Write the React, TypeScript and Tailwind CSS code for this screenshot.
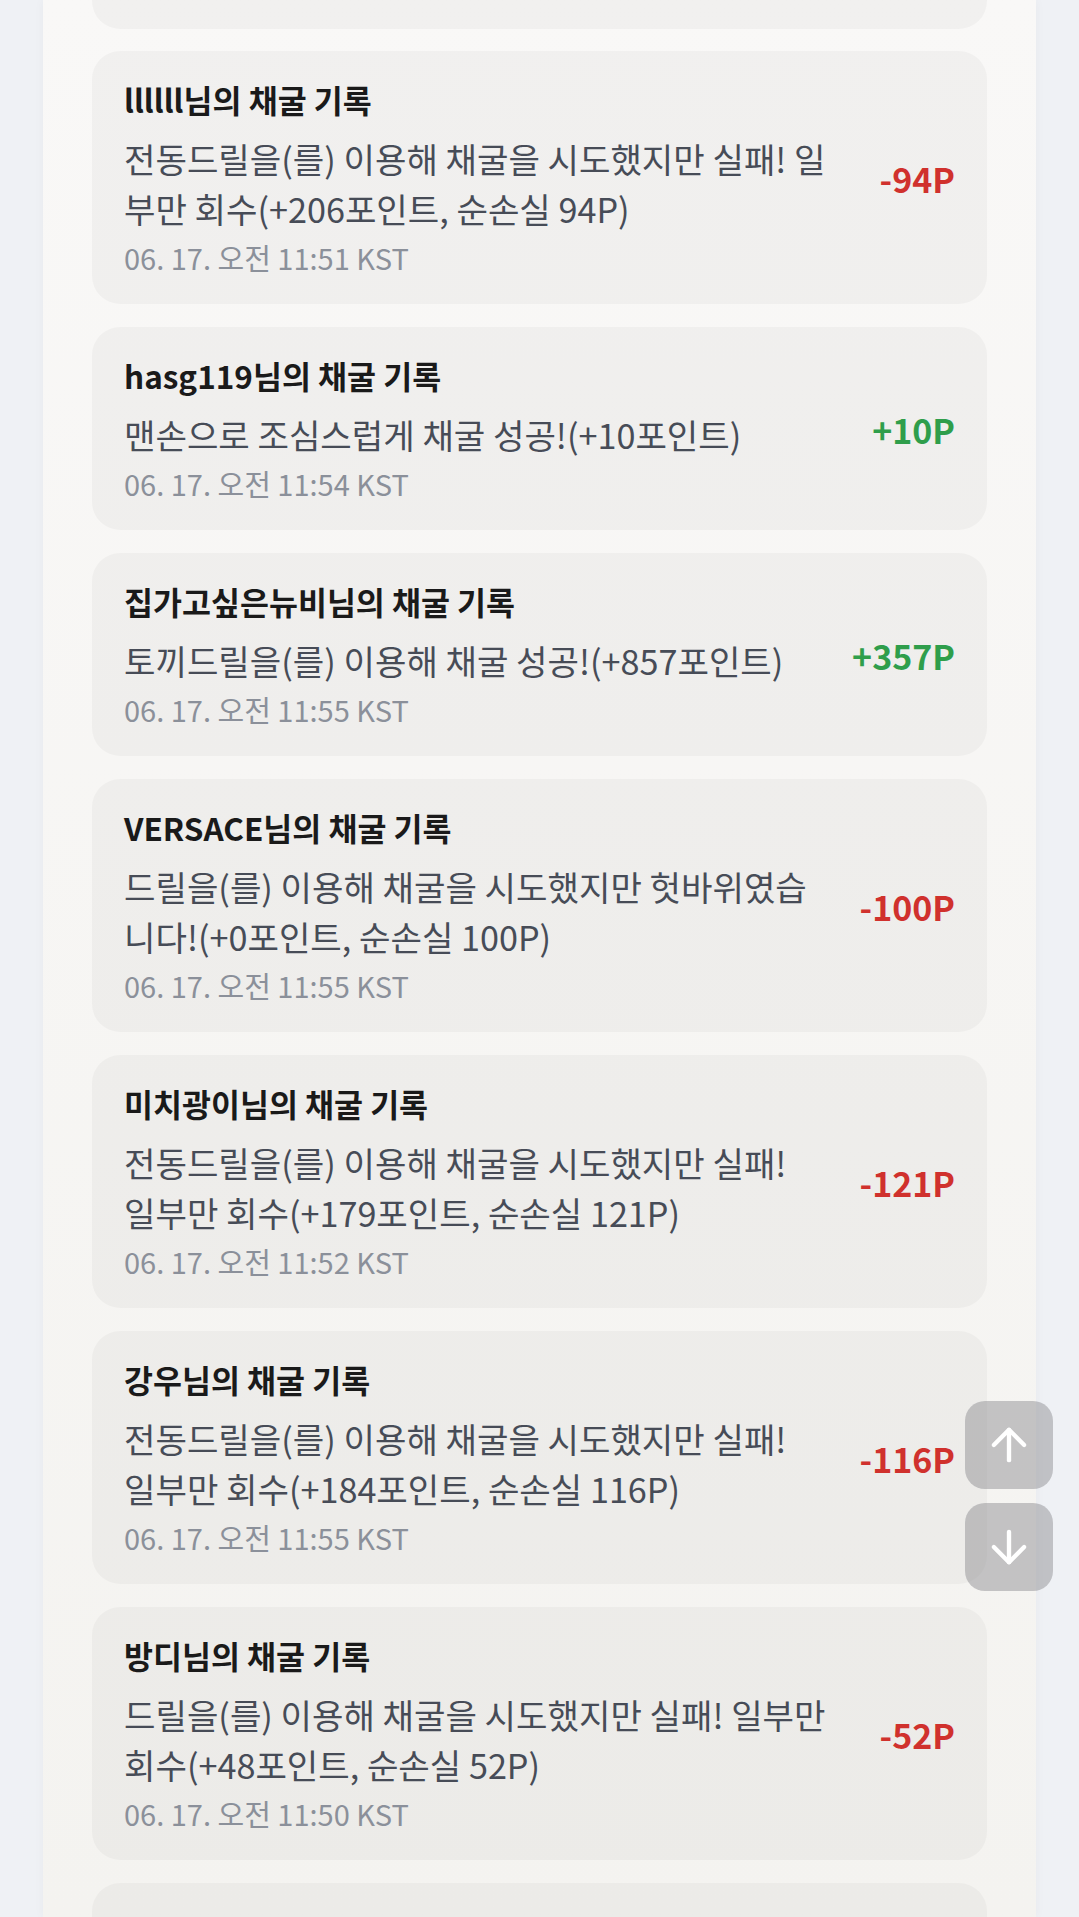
import { ArrowUp, ArrowDown } from 'lucide-react'

type MiningRecord = {
  user: string
  message: string
  time: string
  amount: number
}

const RECORDS: MiningRecord[] = [
  { user: 'llllll', message: '전동드릴을(를) 이용해 채굴을 시도했지만 실패! 일부만 회수(+206포인트, 순손실 94P)', time: '06. 17. 오전 11:51 KST', amount: -94 },
  { user: 'hasg119', message: '맨손으로 조심스럽게 채굴 성공!(+10포인트)', time: '06. 17. 오전 11:54 KST', amount: 10 },
  { user: '집가고싶은뉴비', message: '토끼드릴을(를) 이용해 채굴 성공!(+857포인트)', time: '06. 17. 오전 11:55 KST', amount: 357 },
  { user: 'VERSACE', message: '드릴을(를) 이용해 채굴을 시도했지만 헛바위였습니다!(+0포인트, 순손실 100P)', time: '06. 17. 오전 11:55 KST', amount: -100 },
  { user: '미치광이', message: '전동드릴을(를) 이용해 채굴을 시도했지만 실패! 일부만 회수(+179포인트, 순손실 121P)', time: '06. 17. 오전 11:52 KST', amount: -121 },
  { user: '강우', message: '전동드릴을(를) 이용해 채굴을 시도했지만 실패! 일부만 회수(+184포인트, 순손실 116P)', time: '06. 17. 오전 11:55 KST', amount: -116 },
  { user: '방디', message: '드릴을(를) 이용해 채굴을 시도했지만 실패! 일부만 회수(+48포인트, 순손실 52P)', time: '06. 17. 오전 11:50 KST', amount: -52 },
  { user: '토끼', message: '맨손으로 조심스럽게 채굴 성공!(+10포인트)', time: '06. 17. 오전 11:49 KST', amount: 10 },
]

function RecordCard({ record }: { record: MiningRecord }) {
  const positive = record.amount > 0
  return (
    <div className="flex items-center gap-10 rounded-[28px] bg-black/[0.03] pl-8 pr-8 pt-[29px] pb-[28px]">
      <div className="flex-1 min-w-0">
        <p className="text-[31.5px] leading-[38px] font-bold text-[#1a1a1a]">{record.user}님의 채굴 기록</p>
        <p className="mt-[15px] text-[34.2px] leading-[50px] text-[#474c57]">{record.message}</p>
        <p className="mt-[5px] text-[29px] leading-[38px] text-[#8b909a]">{record.time}</p>
      </div>
      <span
        className={
          positive
            ? 'shrink-0 text-[34px] font-bold text-[#2f9e4b]'
            : 'shrink-0 text-[34px] font-bold text-[#d0312d]'
        }
      >
        {positive ? '+' : ''}
        {record.amount}P
      </span>
    </div>
  )
}

export default function App() {
  return (
    <div
      className="h-[1917px] overflow-hidden bg-[#eff1f5] px-[43px]"
      style={{ fontFamily: '"Noto Sans CJK KR", "Noto Sans", sans-serif' }}
    >
      <div className="h-full bg-gradient-to-b from-[#f9f8f7] to-[#f4f3f0] px-[49px] shadow-[0_0_10px_rgba(0,0,0,0.04)]">
        {/* previous card, scrolled mostly out of view */}
        <div className="h-[29px] rounded-b-[28px] bg-black/[0.03]" />
        <div className="mt-[22px] flex flex-col gap-[23px]">
          {RECORDS.map((r) => (
            <RecordCard key={r.user + r.time} record={r} />
          ))}
        </div>
      </div>

      {/* scroll buttons */}
      <div className="fixed right-[26px] bottom-[326px] flex flex-col gap-[14px]">
        <button className="flex h-[88px] w-[88px] items-center justify-center rounded-[20px] bg-[rgba(140,140,145,0.48)] text-white">
          <ArrowUp size={52} strokeWidth={2} />
        </button>
        <button className="flex h-[88px] w-[88px] items-center justify-center rounded-[20px] bg-[rgba(140,140,145,0.48)] text-white">
          <ArrowDown size={52} strokeWidth={2} />
        </button>
      </div>
    </div>
  )
}
